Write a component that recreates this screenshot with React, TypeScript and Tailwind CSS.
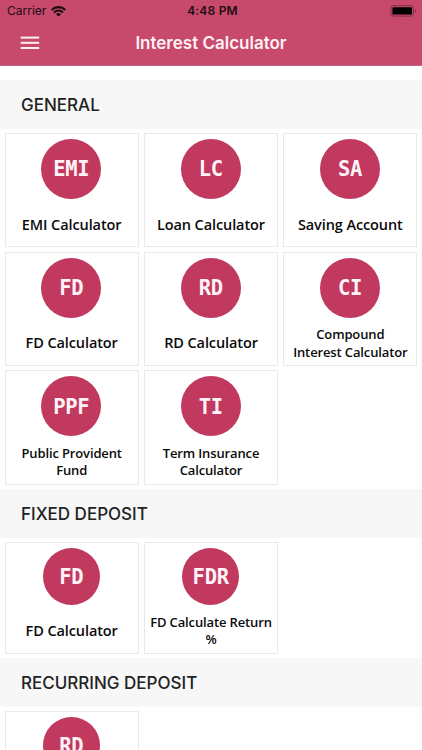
type Item = { code: string; label: string; lines?: string[] };

const general: Item[] = [
  { code: 'EMI', label: 'EMI Calculator' },
  { code: 'LC', label: 'Loan Calculator' },
  { code: 'SA', label: 'Saving Account' },
  { code: 'FD', label: 'FD Calculator' },
  { code: 'RD', label: 'RD Calculator' },
  { code: 'CI', label: 'Compound Interest Calculator', lines: ['Compound', 'Interest Calculator'] },
  { code: 'PPF', label: 'Public Provident Fund', lines: ['Public Provident', 'Fund'] },
  { code: 'TI', label: 'Term Insurance Calculator', lines: ['Term Insurance', 'Calculator'] },
];

const fixed: Item[] = [
  { code: 'FD', label: 'FD Calculator' },
  { code: 'FDR', label: 'FD Calculate Return %', lines: ['FD Calculate Return', '%'] },
];

const recurring: Item[] = [{ code: 'RD', label: '' }];

function Card({ item, small }: { item: Item; small?: boolean }) {
  return (
    <div className={`flex flex-col items-center border border-[#e9e9e9] bg-white pt-[5px] ${small ? 'h-[111.5px]' : 'h-[114.3px]'}`}>
      <div className={`mr-[0.6px] flex shrink-0 items-center justify-center rounded-full bg-[#c1395e] ${small ? 'size-[57px]' : 'size-[60px]'}`}>
        <span className="pt-[1.4px] font-['DejaVu_Sans_Mono',monospace] text-[20.5px] leading-none font-bold tracking-[-0.3px] text-[#fff3f7]">{item.code}</span>
      </div>
      {item.lines ? (
        <div className="flex flex-col items-center pt-[8.7px] text-[13px] leading-[17.3px] font-[580] tracking-[-0.13px] whitespace-nowrap">
          {item.lines.map((line) => (
            <span key={line}>{line}</span>
          ))}
        </div>
      ) : (
        <span className="pt-[15.8px] text-[14.5px] leading-5 font-[580] tracking-[-0.1px] whitespace-nowrap">{item.label}</span>
      )}
    </div>
  );
}

function Section({ title, items, small }: { title: string; items: Item[]; small?: boolean }) {
  return (
    <section>
      <h2 className="flex h-[48.9px] items-center bg-[#f7f7f7] pt-[2px] pl-[21px] font-['Inter',sans-serif] text-[17px] font-medium text-[#222]">
        {title}
      </h2>
      <div className="grid grid-cols-3 gap-x-[5px] gap-y-[4.5px] px-[4.5px] pt-[4px] pb-[4.5px] font-['Open_Sans',sans-serif] text-[#0b0b0b]">
        {items.map((item) => (
          <Card key={item.code} item={item} small={small} />
        ))}
      </div>
    </section>
  );
}

export default function App() {
  return (
    <div className="h-[750px] w-[422px] overflow-hidden bg-white font-['Inter',sans-serif]">
      <header className="h-[66px] border-b border-[#b8667f] bg-[#c7496b]">
        <div className="grid h-[22px] grid-cols-3 items-center px-[7px] text-[#210d13]">
          <div className="flex items-center gap-[5px]">
            <span className="text-[12px]">Carrier</span>
            <svg width="15" height="11" viewBox="0 0 15 11" fill="none" stroke="#160a0e" strokeWidth="2.1">
              <path d="M.8 3.9a9.5 9.5 0 0 1 13.4 0" />
              <path d="M3.1 6.4a6.2 6.2 0 0 1 8.8 0" />
              <path d="M7.5 10.6 5.1 8.2a3.4 3.4 0 0 1 4.8 0Z" fill="#160a0e" stroke="none" />
            </svg>
          </div>
          <span className="pl-[3px] text-center text-[12px] font-semibold tracking-[0.2px]">4:48 PM</span>
          <svg className="-mr-[1.5px] -mt-px justify-self-end" width="27" height="12" viewBox="0 0 27 12">
            <rect x=".9" y=".7" width="22.6" height="10.4" rx="2.6" fill="none" stroke="#7d2f44" />
            <rect x="2.4" y="2.2" width="19.6" height="7.4" rx="1.2" fill="#000" />
            <path d="M25 4.2q1.4.5 1.4 1.7T25 7.6Z" fill="#7d2f44" />
          </svg>
        </div>
        <div className="grid h-[43px] grid-cols-[60px_1fr_60px] items-center">
          <svg className="-mt-[2px] ml-5" width="20" height="14" viewBox="0 0 20 14" fill="#fff0f5">
            <rect x=".7" y=".6" width="18.5" height="2" />
            <rect x=".7" y="5.8" width="18.5" height="2" />
            <rect x=".7" y="11" width="18.5" height="2" />
          </svg>
          <h1 className="text-center text-[17px] font-[560] tracking-[0px] text-[#fff0f5]">Interest Calculator</h1>
        </div>
      </header>
      <main className="pt-[14px]">
        <Section title="GENERAL" items={general} />
        <Section title="FIXED DEPOSIT" items={fixed} small />
        <Section title="RECURRING DEPOSIT" items={recurring} small />
      </main>
    </div>
  );
}
